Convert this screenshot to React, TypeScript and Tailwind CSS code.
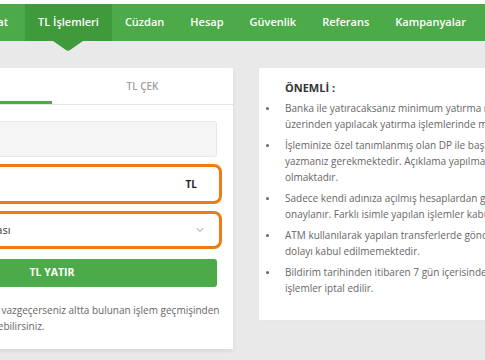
import { ChevronDown } from 'lucide-react';

const navItems = ["Al Sat", "TL İşlemleri", "Cüzdan", "Hesap", "Güvenlik", "Referans", "Kampanyalar"];

const notes = [
  ["Banka ile yatıracaksanız minimum yatırma miktarı 10 TL'dir. ATM", "üzerinden yapılacak yatırma işlemlerinde minimum tutar 100 TL'dir."],
  ["İşleminize özel tanımlanmış olan DP ile başlayan kodu açıklamaya", "yazmanız gerekmektedir. Açıklama yapılmadan gönderilen transferler iade", "olmaktadır."],
  ["Sadece kendi adınıza açılmış hesaplardan gönderilen transferler", "onaylanır. Farklı isimle yapılan işlemler kabul edilmez."],
  ["ATM kullanılarak yapılan transferlerde gönderici bilgisi olmadığından", "dolayı kabul edilmemektedir."],
  ["Bildirim tarihinden itibaren 7 gün içerisinde gerçekleşmeyen", "işlemler iptal edilir."],
];

export default function App() {
  return (
    <div className="w-[485px] h-[360px] overflow-hidden bg-[#e9e9e9] font-['Open_Sans',sans-serif]">
      <div className="h-[4px] bg-white" />
      {/* Top nav */}
      <nav className="h-[37px] bg-[#4caa48] flex items-stretch -ml-[35px] whitespace-nowrap">
        {navItems.map((item, i) => (
          <div
            key={item}
            className={`relative flex items-center px-[13px] text-[11px] font-semibold text-white ${i === 0 ? 'pr-[17px]' : ''} ${item === "TL İşlemleri" ? 'bg-[#3f9a3b]' : ''}`}
          >
            {item}
            {item === "TL İşlemleri" && (
              <svg className="absolute left-1/2 -translate-x-1/2 top-full" width="30" height="10" viewBox="0 0 30 10">
                <path d="M0 0 H30 L17 9 Q15 10.5 13 9 Z" fill="#3f9a3b" />
              </svg>
            )}
          </div>
        ))}
      </nav>

      <div className="flex items-start">
        {/* Deposit card */}
        <div className="-ml-[129px] mt-[27px] w-[362px] bg-white shadow-[0_2px_4px_rgba(0,0,0,0.08)] shrink-0">
          <div className="flex h-[37px] border-b border-[#e4e4e4]">
            <div className="w-1/2 flex items-center justify-center text-[10px] font-semibold text-[#4caa48] border-b-[3px] border-[#4caa48]">TL YATIR</div>
            <div className="w-1/2 flex items-center justify-center text-[10px] font-semibold text-[#a0a0a0]">TL ÇEK</div>
          </div>
          <div className="px-4 pt-[16px] pb-[15px]">
            <div className="h-[36px] rounded-[3px] bg-[#f5f5f5] border border-[#e8e8e8]" />
            <div className="mt-[7px] -mx-[5px] h-[40px] rounded-[8px] border-[3px] border-[#f07a14] bg-white flex items-center justify-end pr-[22px] text-[10px] font-bold text-[#222]">
              TL
            </div>
            <div className="mt-[7px] -mx-[5px] h-[38px] rounded-[8px] border-[3px] border-[#f07a14] bg-white flex items-center justify-between pl-[53px] pr-[13px] text-[11px] text-[#333]">
              <span>Ziraat Bankası</span>
              <ChevronDown className="w-[12px] h-[12px] text-[#888]" strokeWidth={1.75} />
            </div>
            <button className="mt-[10px] w-full h-[28px] rounded-[3px] bg-[#4caa48] text-white text-[10.5px] font-bold">
              TL YATIR
            </button>
            <p className="mt-[15px] text-[10px] leading-[16px] text-[#666] whitespace-nowrap">
              Para yatırma talebinden vazgeçerseniz altta bulunan işlem geçmişinden<br />
              talebini tek tıkla iptal edebilirsiniz.
            </p>
          </div>
        </div>

        {/* Important notes */}
        <div className="ml-[25px] mt-[26px] w-[320px] shrink-0 bg-white border border-[#e6e6e6] pl-[26px] pt-[12px] pb-[24px] whitespace-nowrap">
          <h3 className="text-[11px] font-bold text-[#333] leading-[16px]">ÖNEMLİ :</h3>
          <ul className="mt-[4px] space-y-[5px]">
            {notes.map((lines, i) => (
              <li key={i} className="relative text-[10px] leading-[16px] text-[#666]">
                <span className="absolute -left-[19px] top-[7px] w-[3px] h-[3px] rounded-full bg-[#666]" />
                {lines.map((l, j) => (
                  <div key={j}>{l}</div>
                ))}
              </li>
            ))}
          </ul>
        </div>
      </div>
    </div>
  );
}
